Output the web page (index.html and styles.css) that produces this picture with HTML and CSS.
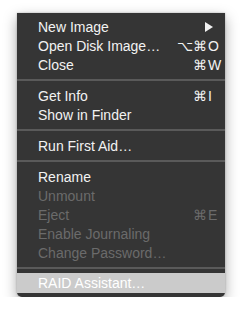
FILE: index.html
```html
<!DOCTYPE html>
<html lang="en">
<head>
  <meta charset="UTF-8" />
  <title>Disk Menu</title>
  <link rel="stylesheet" href="styles.css">
</head>
<body>
  <div class="menu">
    <div class="item">
      <span class="label">New Image</span>
      <span class="submenu">
        <svg width="8" height="10" viewBox="0 0 8 10"><path d="M0 0 L8 5 L0 10 Z" fill="currentColor"/></svg>
      </span>
    </div>
    <div class="item">
      <span class="label">Open Disk Image…</span>
      <span class="keys"><span class="mods">⌥⌘</span><span class="key">O</span></span>
    </div>
    <div class="item">
      <span class="label">Close</span>
      <span class="keys"><span class="mods">⌘</span><span class="key">W</span></span>
    </div>
    <div class="sep"></div>
    <div class="item">
      <span class="label">Get Info</span>
      <span class="keys"><span class="mods">⌘</span><span class="key">I</span></span>
    </div>
    <div class="item">
      <span class="label">Show in Finder</span>
    </div>
    <div class="sep"></div>
    <div class="item">
      <span class="label">Run First Aid…</span>
    </div>
    <div class="sep"></div>
    <div class="item">
      <span class="label">Rename</span>
    </div>
    <div class="item disabled">
      <span class="label">Unmount</span>
    </div>
    <div class="item disabled">
      <span class="label">Eject</span>
      <span class="keys"><span class="mods">⌘</span><span class="key">E</span></span>
    </div>
    <div class="item disabled">
      <span class="label">Enable Journaling</span>
    </div>
    <div class="item disabled">
      <span class="label">Change Password…</span>
    </div>
    <div class="sep last"></div>
    <div class="item selected">
      <span class="label">RAID Assistant…</span>
    </div>
  </div>
</body>
</html>
```

FILE: styles.css
```css
body {
  margin: 0;
  background: #fff;
  font-family: 'Liberation Sans', Arial, sans-serif;
}
.menu {
  margin: 13px 0 0 17px;
  width: 208px;
  padding: 4px 0 4px;
  box-sizing: border-box;
  background: #353535;
  border-radius: 0 0 5px 5px;
  box-shadow: 0 5px 14px rgba(0, 0, 0, 0.35), 0 0 2px rgba(0, 0, 0, 0.3);
}
.item {
  display: flex;
  align-items: center;
  height: 19px;
  padding: 0 0 0 21px;
  font-size: 14px;
  color: #f2f2f2;
}
.item .label {
  flex: 1;
  white-space: nowrap;
}
.item.disabled {
  color: #6b6b6b;
}
.item.selected {
  height: 20px;
  background: #cbcbcb;
  color: #fff;
}
.submenu {
  display: flex;
  justify-content: flex-end;
  width: 20px;
  margin-right: 12px;
}
.keys {
  display: flex;
}
.mods {
  text-align: right;
}
.key {
  width: 17px;
  padding-left: 1px;
}
.sep {
  height: 2px;
  margin: 5px 0;
  background: #5a5a5a;
}
.sep.last {
  margin-bottom: 4px;
}
```
